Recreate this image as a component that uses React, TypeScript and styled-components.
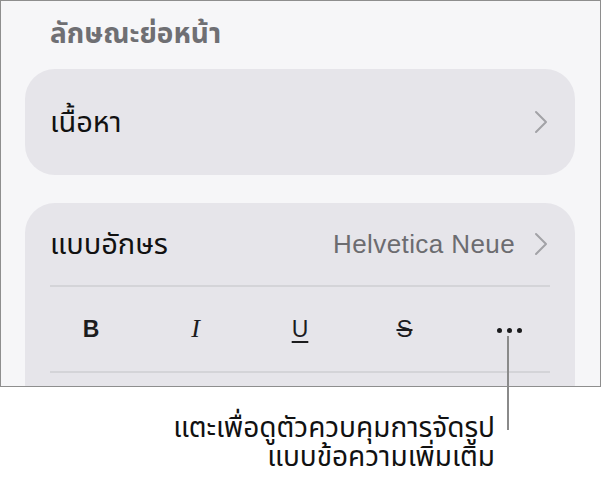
import React from "react";
import styled, { createGlobalStyle } from "styled-components";

const Global = createGlobalStyle`
  html, body { margin: 0; padding: 0; background: #ffffff; }
  body { font-family: "Noto Sans Thai", "Noto Sans", "Liberation Sans", sans-serif; }
`;

const Page = styled.div`
  position: relative;
  width: 601px;
  height: 494px;
  overflow: hidden;
  background: #ffffff;
`;

const Frame = styled.div`
  box-sizing: border-box;
  width: 601px;
  height: 387px;
  border: 1px solid #8e8e8e;
  background: #f6f6f8;
  padding: 0 25px 0 24px;
  overflow: hidden;
`;

const SectionTitle = styled.div`
  box-sizing: border-box;
  height: 68px;
  padding: 16px 0 0 25px;
  font-size: 28px;
  line-height: 36px;
  font-weight: 700;
  color: #6f6f73;
`;

const Card = styled.div<{ $gap?: number }>`
  background: #e6e5ea;
  border-radius: 30px;
  padding: 0 25px;
  margin-bottom: ${(p) => p.$gap ?? 0}px;
`;

const Row = styled.div<{ $h: number }>`
  display: flex;
  align-items: center;
  justify-content: space-between;
  height: ${(p) => p.$h}px;
  box-sizing: border-box;
`;

const Label = styled.span`
  font-size: 29px;
  line-height: 40px;
  color: #111111;
  padding-top: 2px;
`;

const Trailing = styled.div`
  display: flex;
  align-items: center;
  gap: 19px;
  margin-right: 2px;
`;

const Value = styled.span`
  font-family: "Liberation Sans", Arial, sans-serif;
  font-size: 26px;
  letter-spacing: 0.4px;
  color: #6c6c70;
`;

const Divider = styled.div`
  height: 2px;
  background: #d4d4d8;
`;

const StyleBar = styled.div`
  display: flex;
  align-items: center;
  justify-content: space-between;
  height: 84px;
  padding: 0 30px 0 30px;
`;

const StyleBtn = styled.span`
  width: 22px;
  display: flex;
  justify-content: center;
  font-family: "Liberation Sans", Arial, sans-serif;
  font-size: 23px;
  color: #1c1c1e;
`;

const Bold = styled(StyleBtn)`
  font-weight: 700;
`;

const Italic = styled(StyleBtn)`
  font-family: "Liberation Serif", "Times New Roman", serif;
  font-style: italic;
  font-size: 26px;
`;

const Under = styled(StyleBtn)`
  text-decoration: underline;
  text-decoration-thickness: 2px;
  text-underline-offset: 4px;
`;

const Strike = styled(StyleBtn)`
  font-size: 24px;
  text-decoration: line-through;
  text-decoration-thickness: 2px;
`;

const Dots = styled.span`
  display: flex;
  gap: 5px;
  width: 22px;
  justify-content: center;
  padding-top: 2px;
`;

const Dot = styled.i`
  flex: none;
  width: 5px;
  height: 5px;
  border-radius: 50%;
  background: #1c1c1e;
`;

const Caption = styled.div`
  box-sizing: border-box;
  width: 601px;
  padding: 27px 106px 0 0;
  text-align: right;
  font-size: 28px;
  color: #111111;
`;

const CaptionLine = styled.div`
  line-height: 29px;
`;

const CalloutLine = styled.div`
  position: absolute;
  left: 507px;
  top: 336px;
  width: 2px;
  height: 94px;
  background: #8a8a8a;
`;

const Chevron = () => (
  <svg width="14" height="24" viewBox="0 0 14 24" fill="none">
    <polyline
      points="2,2 12,12 2,22"
      stroke="#a2a2a7"
      strokeWidth="2"
      strokeLinecap="round"
      strokeLinejoin="round"
    />
  </svg>
);

export default function App() {
  return (
    <Page>
      <Global />
      <Frame>
        <SectionTitle>ลักษณะย่อหน้า</SectionTitle>
        <Card $gap={28}>
          <Row $h={106}>
            <Label>เนื้อหา</Label>
            <Trailing>
              <Chevron />
            </Trailing>
          </Row>
        </Card>
        <Card>
          <Row $h={82}>
            <Label>แบบอักษร</Label>
            <Trailing>
              <Value>Helvetica Neue</Value>
              <Chevron />
            </Trailing>
          </Row>
          <Divider />
          <StyleBar>
            <Bold>B</Bold>
            <Italic>I</Italic>
            <Under>U</Under>
            <Strike>S</Strike>
            <Dots>
              <Dot />
              <Dot />
              <Dot />
            </Dots>
          </StyleBar>
          <Divider />
          <Row $h={40} />
        </Card>
      </Frame>
      <Caption>
        <CaptionLine>แตะเพื่อดูตัวควบคุมการจัดรูป</CaptionLine>
        <CaptionLine>แบบข้อความเพิ่มเติม</CaptionLine>
      </Caption>
      <CalloutLine />
    </Page>
  );
}
